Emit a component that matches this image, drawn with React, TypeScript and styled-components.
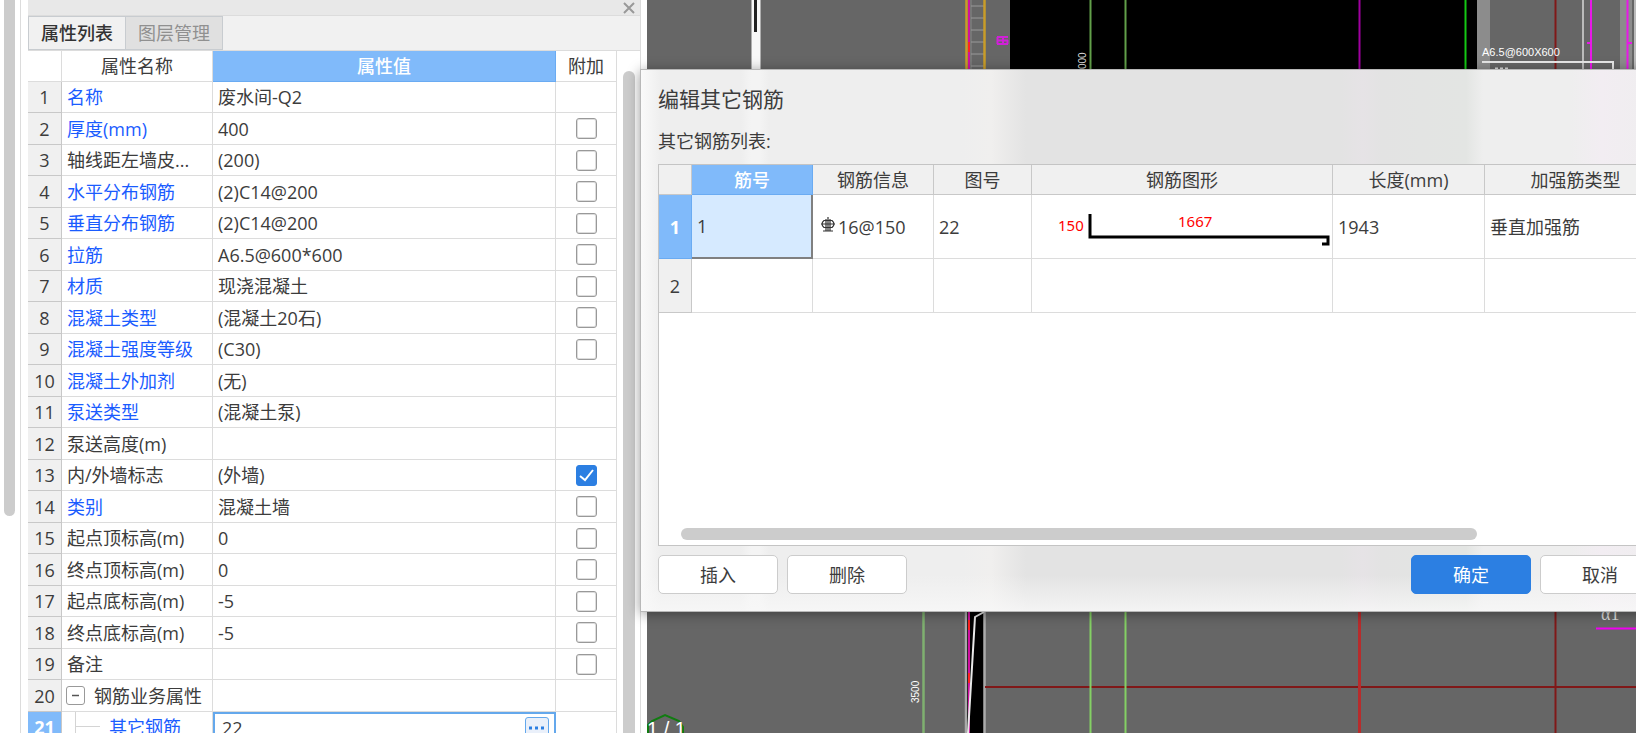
import React from "react";
import styled, { createGlobalStyle, css } from "styled-components";

const Global = createGlobalStyle`
  * { box-sizing: border-box; }
  html, body, #root { height: 100%; }
  body {
    margin: 0;
    overflow: hidden;
    background: #fff;
    color: #3c3c3c;
    font: 18px/24px "Open Sans", "Noto Sans CJK SC", sans-serif;
  }
  button, input { font: inherit; color: inherit; margin: 0; }
`;

const line = "#dcdcdc";

const Page = styled.div`
  position: relative;
  display: flex;
  height: 100vh;
  overflow: hidden;
`;

const Gutter = styled.div`
  flex: none;
  width: 21px;
  padding-left: 4px;
  border-right: 1px solid ${line};
`;

const GutterThumb = styled.div`
  width: 11px;
  height: 516px;
  background: #ccc;
  border-radius: 0 0 6px 6px;
`;

const Dock = styled.section`
  flex: none;
  display: flex;
  flex-direction: column;
  width: 613px;
  margin-left: 7px;
  border-right: 1px solid ${line};
`;

const DockBar = styled.div`
  flex: none;
  height: 16px;
  display: flex;
  justify-content: flex-end;
  align-items: center;
  padding-right: 5px;
  background: #e8e8e8;
  border-bottom: 1px solid ${line};
`;

const CloseButton = styled.button`
  display: flex;
  padding: 0;
  border: 0;
  background: none;
  color: #999;
`;

const Tabs = styled.div`
  flex: none;
  display: flex;
  height: 35px;
  background: #f1f1f1;
  border-bottom: 1px solid ${line};
`;

const Tab = styled.button<{ $active?: boolean }>`
  padding: 0 12px;
  border: 1px solid #c8ccd0;
  border-left-width: ${(p) => (p.$active ? 1 : 0)}px;
  background: ${(p) => (p.$active ? "#f1f1f1" : "#e0e0e0")};
  color: ${(p) => (p.$active ? "#333" : "#909090")};
  font-weight: ${(p) => (p.$active ? 500 : 400)};
  white-space: nowrap;
`;

const DockBody = styled.div`
  display: flex;
  flex: 1;
  min-height: 0;
  overflow: hidden;
`;

const PropTable = styled.table`
  flex: none;
  width: 589px;
  table-layout: fixed;
  border-collapse: separate;
  border-spacing: 0;
  align-self: flex-start;
`;

const PropRow = styled.tr`
  height: 32px;
  &:nth-child(odd) { height: 31px; }
`;

const PropHead = styled.th<{ $selected?: boolean }>`
  height: 31px;
  padding: 0;
  font-weight: ${(p) => (p.$selected ? 500 : 400)};
  color: ${(p) => (p.$selected ? "#fff" : "inherit")};
  background: ${(p) => (p.$selected ? "#80bafa" : "#fff")};
  border-right: 1px solid ${(p) => (p.$selected ? "#6aabf2" : line)};
  border-bottom: 1px solid ${(p) => (p.$selected ? "#6aabf2" : line)};
`;

const PropNumber = styled.th<{ $selected?: boolean }>`
  padding: 0;
  font-weight: ${(p) => (p.$selected ? 700 : 400)};
  color: ${(p) => (p.$selected ? "#fff" : "inherit")};
  background: ${(p) => (p.$selected ? "#80bafa" : "#f0f0f0")};
  border-right: 1px solid #c8c8c8;
  border-bottom: 1px solid #c8c8c8;
`;

const PropCell = styled.td<{ $link?: boolean }>`
  padding: 0 5px;
  white-space: nowrap;
  overflow: hidden;
  text-overflow: ellipsis;
  color: ${(p) => (p.$link ? "#1a5cff" : "inherit")};
  border-right: 1px solid ${line};
  border-bottom: 1px solid ${line};
`;

const CheckCell = styled(PropCell)`
  text-align: center;
  line-height: 0;
`;

const Check = styled.input`
  appearance: none;
  width: 21px;
  height: 21px;
  vertical-align: middle;
  border: 1px solid #999;
  border-radius: 3px;
  background: #fff;
  box-shadow: inset 0 0 0 1px #ddd;
  &:checked {
    border-color: #2c7fe2;
    box-shadow: none;
    background: #2c7fe2 url("data:image/svg+xml,%3Csvg xmlns='http://www.w3.org/2000/svg' viewBox='0 0 19 19'%3E%3Cpath d='M3 10l5 4 8-10' fill='none' stroke='white' stroke-width='2'/%3E%3C/svg%3E");
  }
`;

const GroupLabel = styled.span`
  display: flex;
  align-items: center;
  gap: 9px;
  margin-left: -1px;
`;

const Toggle = styled.button`
  display: flex;
  align-items: center;
  justify-content: center;
  width: 19px;
  height: 19px;
  padding: 0;
  border: 1px solid #999;
  border-radius: 3px;
  background: #fff;
`;

const BranchLabel = styled.span`
  display: flex;
  align-items: center;
  gap: 8px;
  padding-left: 8px;
`;

const EditCell = styled(PropCell)`
  padding: 0;
  border: 2px solid #64a8ec;
`;

const EditBox = styled.div`
  display: flex;
  align-items: center;
  padding: 0 5px 0 7px;
`;

const EditInput = styled.input`
  flex: 1;
  min-width: 0;
  height: 26px;
  padding: 0;
  border: 0;
  outline: 0;
  background: none;
`;

const MoreButton = styled.button`
  display: flex;
  align-items: center;
  justify-content: center;
  width: 24px;
  height: 21px;
  padding: 0;
  border: 1px solid #64a8ec;
  border-radius: 3px;
  background: #eaf0fa;
`;

const DockScroll = styled.div`
  flex: 1;
  padding: 20px 5px 0 6px;
`;

const DockThumb = styled.div`
  height: 100%;
  background: #ccc;
  border-radius: 6px 6px 0 0;
`;

const Viewport = styled.main`
  flex: 1;
  min-width: 0;
  margin-left: 6px;
  background: #666;
  overflow: hidden;
  svg { display: block; }
`;

const Dialog = styled.section`
  position: absolute;
  left: 640px;
  top: 69px;
  right: -42px;
  display: flex;
  flex-direction: column;
  padding: 16px 17px 17px;
  border: 1px solid #b8b8b8;
  background:
    linear-gradient(0deg, rgba(248, 248, 248, 0.8) 0, rgba(248, 248, 248, 0) 36px),
    linear-gradient(90deg, #fafafa 0, rgba(250, 250, 250, 0) 20px),
    linear-gradient(90deg, rgba(246, 246, 246, 0) 100px, #f4f4f4 110px, #f4f4f4 118px, rgba(246, 246, 246, 0) 128px),
    linear-gradient(90deg, #eee 0, #eee 320px, #f0efee 350px, #e3e3e3 385px, #e3e3e3 700px, #e6e3e6 722px, #e3e3e3 740px, #e3e5e3 825px, #eee 842px, #eee 930px, #f2edf2 960px, #eee 100%);
  box-shadow: 0 2px 12px rgba(0, 0, 0, 0.4);
`;

const DialogTitle = styled.h2`
  margin: 0 0 17px;
  font-size: 21px;
  line-height: 26px;
  font-weight: 400;
`;

const Caption = styled.p`
  margin: 0 0 11px;
`;

const ListPane = styled.div`
  height: 382px;
  display: flex;
  flex-direction: column;
  justify-content: space-between;
  border: 1px solid #c4c4c4;
  background: #fff;
  overflow: hidden;
`;

const BarTable = styled.table`
  width: 1008px;
  table-layout: fixed;
  border-collapse: separate;
  border-spacing: 0;
`;

const headFill = css<{ $selected?: boolean }>`
  color: ${(p) => (p.$selected ? "#fff" : "inherit")};
  background: ${(p) => (p.$selected ? "#80bafa" : "#f0f0f0")};
  border-right: 1px solid ${(p) => (p.$selected ? "#6aabf2" : "#c8c8c8")};
  border-bottom: 1px solid ${(p) => (p.$selected ? "#6aabf2" : "#c8c8c8")};
`;

const BarHead = styled.th<{ $selected?: boolean }>`
  height: 30px;
  padding: 0;
  font-weight: ${(p) => (p.$selected ? 500 : 400)};
  ${headFill}
`;

const BarNumber = styled.th<{ $selected?: boolean }>`
  padding: 0;
  font-weight: ${(p) => (p.$selected ? 700 : 400)};
  ${headFill}
`;

const BarRow = styled.tr<{ $tall?: boolean }>`
  height: ${(p) => (p.$tall ? 64 : 54)}px;
`;

const BarCell = styled.td<{ $current?: boolean; $flush?: boolean }>`
  padding: 0 ${(p) => (p.$flush ? 0 : 5)}px;
  white-space: nowrap;
  border-right: 1px solid ${line};
  border-bottom: 1px solid ${line};
  ${(p) => p.$current && css`
    background: #d6eaff;
    border-right: 2px solid #808080;
    border-bottom: 2px solid #808080;
  `}
`;

const Spec = styled.span`
  display: flex;
  align-items: center;
  gap: 3px;
  padding-left: 3px;
`;

const Shape = styled.svg`
  display: block;
`;

const ListThumb = styled.div`
  flex: none;
  width: 796px;
  height: 12px;
  margin: 0 0 5px 22px;
  background: #ccc;
  border-radius: 6px;
`;

const Actions = styled.footer`
  display: flex;
  gap: 9px;
  margin-top: 9px;
`;

const ActionButton = styled.button<{ $primary?: boolean }>`
  width: 120px;
  height: 39px;
  padding: 0;
  border: 1px solid ${(p) => (p.$primary ? "#2c7fe2" : "#ccc")};
  border-radius: 5px;
  background: ${(p) => (p.$primary ? "#2c7fe2" : "#fff")};
  color: ${(p) => (p.$primary ? "#fff" : "inherit")};
`;

const Spacer = styled.span`
  flex: 1;
`;

type Prop = { name: string; value: string; link?: boolean; check?: boolean };

const props: Prop[] = [
  { name: "名称", value: "废水间-Q2", link: true },
  { name: "厚度(mm)", value: "400", link: true, check: false },
  { name: "轴线距左墙皮...", value: "(200)", check: false },
  { name: "水平分布钢筋", value: "(2)C14@200", link: true, check: false },
  { name: "垂直分布钢筋", value: "(2)C14@200", link: true, check: false },
  { name: "拉筋", value: "A6.5@600*600", link: true, check: false },
  { name: "材质", value: "现浇混凝土", link: true, check: false },
  { name: "混凝土类型", value: "(混凝土20石)", link: true, check: false },
  { name: "混凝土强度等级", value: "(C30)", link: true, check: false },
  { name: "混凝土外加剂", value: "(无)", link: true },
  { name: "泵送类型", value: "(混凝土泵)", link: true },
  { name: "泵送高度(m)", value: "" },
  { name: "内/外墙标志", value: "(外墙)", check: true },
  { name: "类别", value: "混凝土墙", link: true, check: false },
  { name: "起点顶标高(m)", value: "0", check: false },
  { name: "终点顶标高(m)", value: "0", check: false },
  { name: "起点底标高(m)", value: "-5", check: false },
  { name: "终点底标高(m)", value: "-5", check: false },
  { name: "备注", value: "", check: false },
];

function PropertyDock() {
  return (
    <Dock>
      <DockBar>
        <CloseButton aria-label="关闭">
          <svg width="12" height="12" viewBox="0 0 12 12"><path d="M1 1l10 10M11 1L1 11" stroke="currentColor" strokeWidth="2" /></svg>
        </CloseButton>
      </DockBar>
      <Tabs>
        <Tab $active>属性列表</Tab>
        <Tab>图层管理</Tab>
      </Tabs>
      <DockBody>
        <PropTable>
          <colgroup>
            <col width="34" /><col width="151" /><col /><col width="61" />
          </colgroup>
          <thead>
            <tr>
              <PropHead />
              <PropHead>属性名称</PropHead>
              <PropHead $selected>属性值</PropHead>
              <PropHead>附加</PropHead>
            </tr>
          </thead>
          <tbody>
            {props.map((p, i) => (
              <PropRow key={p.name}>
                <PropNumber scope="row">{i + 1}</PropNumber>
                <PropCell $link={p.link}>{p.name}</PropCell>
                <PropCell>{p.value}</PropCell>
                <CheckCell>
                  {p.check !== undefined && <Check type="checkbox" aria-label={p.name} defaultChecked={p.check} />}
                </CheckCell>
              </PropRow>
            ))}
            <PropRow>
              <PropNumber scope="row">20</PropNumber>
              <PropCell>
                <GroupLabel>
                  <Toggle aria-label="折叠"><svg width="9" height="9"><path d="M1 4.500h7" stroke="#555" strokeWidth="1.500" /></svg></Toggle>
                  钢筋业务属性
                </GroupLabel>
              </PropCell>
              <PropCell /><PropCell />
            </PropRow>
            <PropRow>
              <PropNumber scope="row" $selected>21</PropNumber>
              <PropCell $link>
                <BranchLabel>
                  <svg width="26" height="30"><path d="M.5 0v30M0 14.500h25" stroke="#d4d4d4" fill="none" /></svg>
                  其它钢筋
                </BranchLabel>
              </PropCell>
              <EditCell>
                <EditBox>
                  <EditInput aria-label="其它钢筋" defaultValue="22" />
                  <MoreButton aria-label="更多">
                    <svg width="16" height="4"><path d="M0 .5h3v3H0zM6 .5h3v3H6zM12 .5h3v3h-3z" fill="#2c7fe2" /></svg>
                  </MoreButton>
                </EditBox>
              </EditCell>
              <PropCell />
            </PropRow>
          </tbody>
        </PropTable>
        <DockScroll><DockThumb /></DockScroll>
      </DockBody>
    </Dock>
  );
}

function Drawing() {
  return (
    <svg width="100%" height="100%" viewBox="647 0 989 733" preserveAspectRatio="xMinYMin slice" fontFamily="Liberation Sans, sans-serif">
      <path d="M756 0v80" stroke="#f8f8f8" strokeWidth="9" />
      <path d="M755.500 0v32" stroke="#222" strokeWidth="3" />
      <path d="M971 0v70" stroke="#888" strokeWidth="1" />
      <path d="M971 6h13M971 18h13M971 30h13M971 42h13M971 54h13M971 66h13" stroke="#999" />
      <path d="M966.500 0v70M984.500 0v70" stroke="#c89c28" strokeWidth="2.500" />
      <path d="M969 0v70" stroke="#d010a0" strokeWidth="2" />
      <path d="M969 42v10" stroke="#f22" strokeWidth="2" />
      <path d="M997 37h11M997 40.500h11M997 44h11M997.500 37v7M1003 37v7M1007.500 40v4" stroke="#d020d8" strokeWidth="2" fill="none" />
      <rect x="1010" width="467" height="70" />
      <path d="M1090.500 0v70M1125.500 0v70" stroke="#62a04a" strokeWidth="2" />
      <path d="M1359.500 0v70" stroke="#a000a0" strokeWidth="2" />
      <path d="M1465.500 0v70" stroke="#14c814" strokeWidth="2" />
      <text x="-69" y="1086" transform="rotate(-90)" fill="#ddd" fontSize="10">000</text>
      <rect x="1477" width="13" height="70" fill="#8c8c8c" />
      <rect x="1620" width="12" height="70" fill="#8c8c8c" />
      <path d="M1555.500 0v70" stroke="#801818" strokeWidth="2" />
      <path d="M1583 0v70M1635 0v70" stroke="#bbb" strokeWidth="2" />
      <path d="M1591 0v70M1627.500 0v70M1587 43h4M1628 43h4" stroke="#e818e8" strokeWidth="2" />
      <path d="M1482 62h131v8" stroke="#e8e8e8" strokeWidth="2" fill="none" />
      <path d="M1495 68.500h14" stroke="#ddd" strokeWidth="2" strokeDasharray="3 2" />
      <text x="1482" y="56" fill="#fff" fontSize="11">A6.5@600X600</text>

      <path d="M923.500 612v121" stroke="#7fb070" strokeWidth="2.500" />
      <text x="-703" y="919" transform="rotate(-90)" fill="#fff" fontSize="10">3500</text>
      <rect x="966" y="612" width="18" height="121" />
      <path d="M966 612v121M984.500 612v121" stroke="#aaa" strokeWidth="2.500" />
      <path d="M969 612v121" stroke="#d010a0" strokeWidth="2" />
      <path d="M969 620v10M969 673v10" stroke="#f22" strokeWidth="2" />
      <path d="M984 612l-9 5-3 50-4 66" stroke="#e8e8e8" strokeWidth="2" fill="none" />
      <path d="M985 687h651" stroke="#801818" strokeWidth="2" />
      <path d="M1090.500 612v121M1125.500 612v121" stroke="#84d064" strokeWidth="2" />
      <path d="M1359.500 612v121" stroke="#b82c2c" strokeWidth="3" />
      <path d="M1555.500 612v121" stroke="#801818" strokeWidth="2" />
      <text x="1601" y="620" fill="#ddd" fontSize="18" fontFamily="Liberation Serif, serif">α1</text>
      <path d="M1596 628.500h40" stroke="#f000f0" strokeWidth="2" />
      <path d="M648 733v-8l4-4 13-6 14 6 4 6v6" stroke="#107c10" strokeWidth="2" fill="none" />
      <text x="647" y="736" fill="#fff" fontSize="20">1 / 1</text>
    </svg>
  );
}

function RebarDialog() {
  return (
    <Dialog role="dialog" aria-labelledby="rebar-title">
      <DialogTitle id="rebar-title">编辑其它钢筋</DialogTitle>
      <Caption>其它钢筋列表:</Caption>
      <ListPane>
        <BarTable>
          <colgroup>
            <col width="33" /><col width="121" /><col width="121" /><col width="98" />
            <col width="301" /><col width="152" /><col />
          </colgroup>
          <thead>
            <tr>
              <BarHead />
              <BarHead $selected>筋号</BarHead>
              <BarHead>钢筋信息</BarHead>
              <BarHead>图号</BarHead>
              <BarHead>钢筋图形</BarHead>
              <BarHead>长度(mm)</BarHead>
              <BarHead>加强筋类型</BarHead>
            </tr>
          </thead>
          <tbody>
            <BarRow $tall>
              <BarNumber scope="row" $selected>1</BarNumber>
              <BarCell $current>1</BarCell>
              <BarCell>
                <Spec>
                  <svg width="14" height="20" viewBox="0 0 14 20"><path d="M5 2v12M9 2v12M7 0v14M0 7h14M5 3.500H3Q-1 7 3 10.500h8Q15 7 11 3.500H5M2 14h10" fill="none" stroke="#333" strokeWidth="1.200" /></svg>
                  16@150
                </Spec>
              </BarCell>
              <BarCell>22</BarCell>
              <BarCell $flush>
                <Shape width="300" height="62" viewBox="1032 196 300 62" fontFamily="Noto Sans, sans-serif" fontSize="15" fill="#f00">
                  <text x="1058" y="231">150</text>
                  <text x="1178" y="227">1667</text>
                  <path d="M1090 214v23h238v7h-6" fill="none" stroke="#000" strokeWidth="3" />
                </Shape>
              </BarCell>
              <BarCell>1943</BarCell>
              <BarCell>垂直加强筋</BarCell>
            </BarRow>
            <BarRow>
              <BarNumber scope="row">2</BarNumber>
              <BarCell /><BarCell /><BarCell /><BarCell /><BarCell /><BarCell />
            </BarRow>
          </tbody>
        </BarTable>
        <ListThumb />
      </ListPane>
      <Actions>
        <ActionButton>插入</ActionButton>
        <ActionButton>删除</ActionButton>
        <Spacer />
        <ActionButton $primary>确定</ActionButton>
        <ActionButton>取消</ActionButton>
      </Actions>
    </Dialog>
  );
}

export default function App() {
  return (
    <>
      <Global />
      <Page>
        <Gutter><GutterThumb /></Gutter>
        <PropertyDock />
        <Viewport><Drawing /></Viewport>
        <RebarDialog />
      </Page>
    </>
  );
}
